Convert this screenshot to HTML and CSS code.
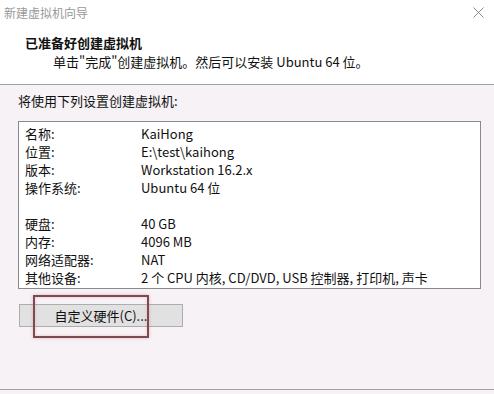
FILE: index.html
```html
<!DOCTYPE html>
<html lang="zh-CN">
<head>
    <meta charset="UTF-8">
    <title>新建虚拟机向导</title>
    <link rel="stylesheet" href="styles.css">
</head>
<body>
    <div class="wizard">
        <div class="header">
            <div class="titlebar">
                <span class="title">新建虚拟机向导</span>
                <svg class="close" width="11" height="11" viewBox="0 0 11 11">
                    <path d="M0.5 0.5 L10.5 10.5 M10.5 0.5 L0.5 10.5" stroke="#8a8a8a" stroke-width="1" fill="none"/>
                </svg>
            </div>
            <h1>已准备好创建虚拟机</h1>
            <p class="sub">单击"完成"创建虚拟机。然后可以安装 Ubuntu 64 位。</p>
        </div>

        <div class="content">
            <p class="intro">将使用下列设置创建虚拟机:</p>
            <div class="summary">
                <div class="row"><span class="label">名称:</span><span>KaiHong</span></div>
                <div class="row"><span class="label">位置:</span><span>E:\test\kaihong</span></div>
                <div class="row"><span class="label">版本:</span><span>Workstation 16.2.x</span></div>
                <div class="row"><span class="label">操作系统:</span><span>Ubuntu 64 位</span></div>
                <div class="row"></div>
                <div class="row"><span class="label">硬盘:</span><span>40 GB</span></div>
                <div class="row"><span class="label">内存:</span><span>4096 MB</span></div>
                <div class="row"><span class="label">网络适配器:</span><span>NAT</span></div>
                <div class="row"><span class="label">其他设备:</span><span>2 个 CPU 内核, CD/DVD, USB 控制器, 打印机, 声卡</span></div>
            </div>
            <div class="actions">
                <button class="btn">自定义硬件(C)...</button>
                <div class="mark"></div>
            </div>
        </div>

        <div class="footer"></div>
    </div>
</body>
</html>
```

FILE: styles.css
```css
body {
    margin: 0;
    font-family: "Noto Sans CJK SC", "Liberation Sans", sans-serif;
    font-size: 13px;
    color: #111;
    background: #f6f2f5;
}
.wizard {
    width: 494px;
    height: 394px;
    overflow: hidden;
    display: flex;
    flex-direction: column;
}
.header {
    background: #fff;
    height: 84px;
    border-bottom: 1px solid #a3a0a2;
}
.titlebar {
    height: 24px;
    display: flex;
    align-items: center;
    justify-content: space-between;
    padding: 0 10px 0 4px;
}
.title {
    color: #999;
    font-size: 12px;
}
h1 {
    margin: 10px 0 0 25px;
    font-size: 13px;
    font-weight: bold;
    line-height: 18px;
}
.sub {
    margin: 0 0 0 53px;
    line-height: 19px;
}
.content {
    flex: 1;
    padding: 7px 13px 0 18px;
}
.intro {
    margin: 0 0 11px 0;
    line-height: 18px;
}
.summary {
    background: #fff;
    border: 1px solid #8a8a8e;
    padding: 3px 0 2px 6px;
    height: 161px;
}
.row {
    display: flex;
    height: 18px;
    line-height: 18px;
}
.label {
    width: 116px;
    flex: none;
}
.actions {
    position: relative;
    margin-top: 15px;
    padding-left: 1px;
}
.btn {
    width: 164px;
    height: 23px;
    font-family: inherit;
    font-size: 13px;
    color: #111;
    background: #e1e1e1;
    border: 1px solid #adadad;
    padding: 0;
}
.mark {
    position: absolute;
    left: 15px;
    top: -9px;
    width: 112px;
    height: 39px;
    border: 2px solid #7a4b52;
    box-shadow: 0 0 3px rgba(230, 120, 130, 0.5), inset 0 0 3px rgba(230, 120, 130, 0.4);
}
.footer {
    height: 4px;
    border-top: 1px solid #a3a0a2;
    margin-top: 1px;
    background: #f6f2f5;
}
```
